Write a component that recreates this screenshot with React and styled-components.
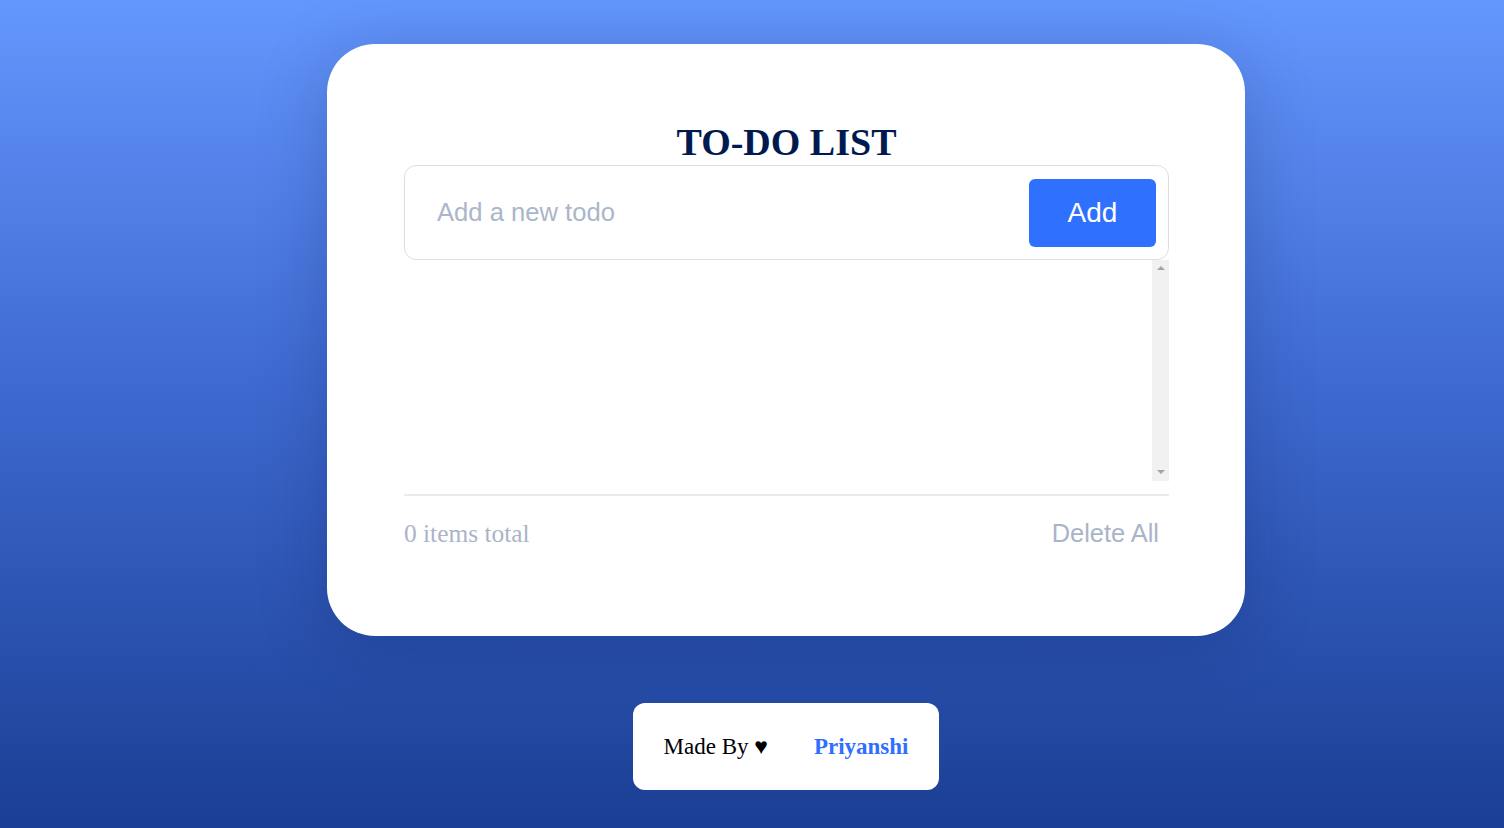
import styled, { createGlobalStyle } from 'styled-components';

const GlobalStyle = createGlobalStyle`
  * {
    box-sizing: border-box;
  }
  html, body {
    margin: 0;
    padding: 0;
  }
  body {
    min-height: 100vh;
    background: linear-gradient(180deg, #6497fd 0%, #3f6bd2 45%, #1a3e93 100%);
    font-family: 'Liberation Serif', 'Times New Roman', serif;
  }
`;

const Page = styled.div`
  min-height: 100vh;
  padding-left: 68px;
  display: flex;
  flex-direction: column;
  align-items: center;
`;

const Card = styled.div`
  margin-top: 44px;
  width: 918px;
  height: 592px;
  padding: 77px 76px 0 77px;
  background: #fff;
  border-radius: 48px;
  box-shadow: 0 10px 70px rgba(0, 20, 70, 0.22);
`;

const Title = styled.h1`
  margin: 0 0 2px;
  font-family: 'Liberation Serif', 'Times New Roman', serif;
  font-size: 38px;
  line-height: 42px;
  font-weight: 700;
  text-align: center;
  color: #001a4f;
`;

const InputRow = styled.form`
  height: 95px;
  display: flex;
  align-items: center;
  padding: 0 12px 0 32px;
  border: 1px solid #dedede;
  border-radius: 12px;
`;

const TodoInput = styled.input`
  flex: 1;
  padding: 0;
  border: none;
  outline: none;
  background: transparent;
  font-family: 'Liberation Sans', Arial, sans-serif;
  font-size: 25.6px;
  color: #333;

  &::placeholder {
    color: #aab6ca;
  }
`;

const AddButton = styled.button`
  width: 127px;
  height: 68px;
  border: none;
  border-radius: 6px;
  background: #2f70ff;
  color: #fff;
  font-family: 'Liberation Sans', Arial, sans-serif;
  font-size: 28px;
  cursor: pointer;
`;

const ListArea = styled.div`
  height: 221px;
  display: flex;
`;

const ListBody = styled.ul`
  flex: 1;
  margin: 0;
  padding: 0;
  list-style: none;
`;

const ScrollRail = styled.div`
  width: 17px;
  background: #f1f1f1;
  display: flex;
  flex-direction: column;
  align-items: center;
  justify-content: space-between;
  padding: 6px 0 7px;
`;

const Arrow = styled.span`
  width: 0;
  height: 0;
  border-left: 4px solid transparent;
  border-right: 4px solid transparent;
  ${({ $down }) =>
    $down ? 'border-top: 4px solid #a3a3a3;' : 'border-bottom: 4px solid #a3a3a3;'}
`;

const Divider = styled.hr`
  margin: 13px 0 0;
  height: 2px;
  border: none;
  background: #ebebeb;
`;

const Footer = styled.div`
  margin-top: 23px;
  display: flex;
  align-items: center;
  justify-content: space-between;
`;

const Count = styled.span`
  font-family: 'Liberation Serif', 'Times New Roman', serif;
  font-size: 25.4px;
  color: #aab4c8;
`;

const DeleteButton = styled.button`
  padding: 0 10px 0 0;
  border: none;
  background: none;
  font-family: 'Liberation Sans', Arial, sans-serif;
  font-size: 25.4px;
  color: #aab4c8;
  cursor: pointer;
`;

const Credit = styled.div`
  margin-top: 67px;
  height: 87px;
  padding: 0 31px;
  display: flex;
  align-items: center;
  gap: 46px;
  background: #fff;
  border-radius: 12px;
`;

const MadeBy = styled.span`
  font-family: 'Liberation Serif', 'DejaVu Serif', serif;
  font-size: 23px;
  color: #000;
`;

const Author = styled.a`
  font-family: 'Liberation Serif', 'Times New Roman', serif;
  font-size: 23px;
  font-weight: 700;
  color: #2f6fff;
  text-decoration: none;
`;

const App = () => {
  const todos = [];

  return (
    <Page>
      <GlobalStyle />
      <Card>
        <Title>TO-DO LIST</Title>
        <InputRow onSubmit={(e) => e.preventDefault()}>
          <TodoInput placeholder='Add a new todo' />
          <AddButton type='submit'>Add</AddButton>
        </InputRow>
        <ListArea>
          <ListBody>
            {todos.map((t) => (
              <li key={t}>{t}</li>
            ))}
          </ListBody>
          {/* scrollbar rail */}
          <ScrollRail>
            <Arrow />
            <Arrow $down />
          </ScrollRail>
        </ListArea>
        <Divider />
        <Footer>
          <Count>{todos.length} items total</Count>
          <DeleteButton type='button'>Delete All</DeleteButton>
        </Footer>
      </Card>
      <Credit>
        <MadeBy>Made By ♥</MadeBy>
        <Author href='#'>Priyanshi</Author>
      </Credit>
    </Page>
  );
};

export default App;
